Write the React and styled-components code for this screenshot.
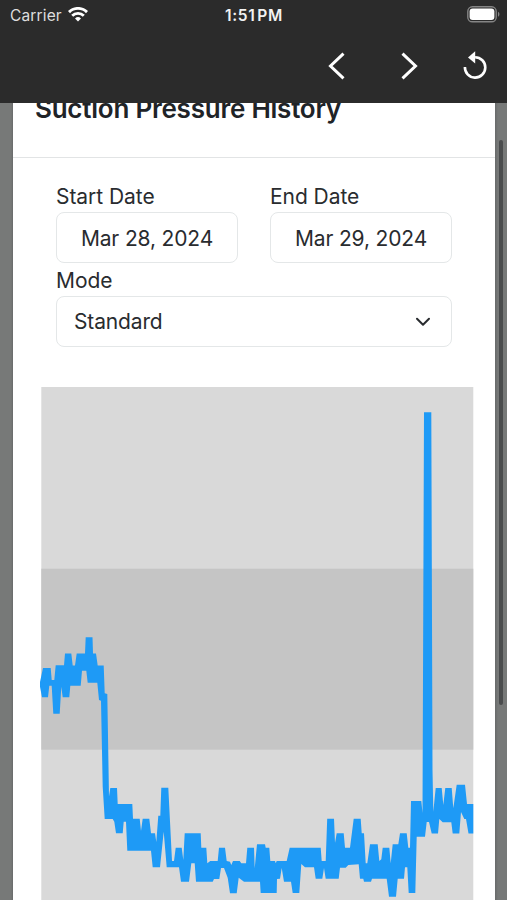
import React from "react";
import styled, { createGlobalStyle } from "styled-components";

/* ---------------- DATA ---------------- */

// upper edge of the pressure trace, left to right
const upper = `40,682 43,668 50.7,668 51.7,680 54.3,680 55.7,665.3 64,665.3 65,653.5
  71.3,653.5 72.7,665.5 75,665.5 76.7,653.5 85,653.5 85.7,637.3 92.5,637.3 93,653.5
  96,653.5 97.7,665.5 103.7,665.5 104.7,693.3 107.3,694 109,796.5 110.3,788 117,788
  117.7,804 132.3,804 133,818.7 139.7,818.7 141,831 142.7,818.7 149.3,818.7 151,833.3
  155,833.3 156.3,842 158.3,815.7 160.3,815.7 161.3,787.7 168.3,787.7 172,861 174,861
  175.7,847.7 181.7,847.7 183.3,860 184.7,833.3 200.7,833.3 201.3,847.7 206.3,847.7
  207.3,863.3 210.3,861 217.7,861 219,847.7 225,847.7 226.7,861 230,861.7 231.3,865
  233,861 239.7,861 241.3,863.3 246,863.3 247.3,847.7 254,847.7 254.7,868.3 257,844.3
  265,844.3 265.7,847.7 269.3,847.7 270.3,861 275,861 275.7,863.3 276.7,861 286.7,861
  289.7,847.7 320.7,847.7 321.7,861 325.7,861 327.2,818.7 334,818.7 335,843 336.7,833.3
  343.7,833.3 345,847.7 350,847.7 353.7,818.7 360.7,818.7 361.7,833.3 364,833.3
  365.7,863.3 367.3,863.3 370,844.3 377.7,844.3 379.3,861 381.3,859.3 382.7,847.7
  389.3,847.7 390.7,863.3 392.7,844.3 398.3,844.3 400,833.3 406.7,833.3 408.3,847.7
  410,847.7 411,801 421.3,801 422.5,813 424,412.3 431.3,412.3 432.5,770 433.3,811.7
  435.7,788 441.7,788 443.3,805 445.3,788 451.7,788 453.3,808.3 456.7,784.7 465,784.7
  467,804 473.3,804`;

// lower edge, right to left
const lower = `473.3,833.5 468.5,833.5 466,819 464.3,819 461,812 459.3,833.5 452.7,833.5
  451.3,822.3 442.7,822.3 439.3,819 438,833.5 431.7,833.5 429,822 426.7,822 425,836.7
  416.7,836.7 415.3,893 408.7,893 407.3,867.3 405,867.3 404,878.7 397.7,878.7 396,896.7
  389,896.7 386.7,878.7 372,878.7 371,881.7 364,881.7 363.3,878.7 360,878.7 358.7,864.3
  348.3,865 345.7,867.7 340,867.7 338.7,878.7 325.7,878.7 324,868 322.3,878.7
  315.7,878.7 314,867.3 305,867.3 301.3,864 299.3,893 292.7,893 291,881.7 284,881.7
  281.7,868 280,878.7 277,879 276.7,893 260.7,893 260,881.7 244,881.7 238.7,877.7
  236.7,893.3 230,893.3 227.7,877.7 224,868 221,868 219.3,879 214,879 212.7,881.7
  196,881.7 194.7,863.3 191.3,863.3 189,881.7 181,881.7 179,867.3 166.7,867.3
  163.7,831.7 160,867.3 152.7,867.3 151,850.7 127.3,850.7 126,821.7 123.7,821.7
  122.7,833.3 116,833.3 114.3,821.7 112.7,819 104.7,819 102.7,786.7 101,700.7 99,700
  97.3,682.7 87.7,682.7 86.3,670.7 82,670.7 80.7,685.7 70.3,685.7 69.3,697.3 62.7,697.3
  61.3,686.7 59.7,713.7 53.3,713.7 51.7,685.7 49.3,685.7 48,697.3 42,697.3 40,686.7`;

const dates = [
  { label: "Start Date", value: "Mar 28, 2024" },
  { label: "End Date", value: "Mar 29, 2024" },
];

/* ---------------- COMPONENT ---------------- */

const App = () => (
  <>
    <GlobalStyle />
    <Screen>
      <Header>
        <StatusBar>
          <Carrier>
            Carrier
            <svg width="20" height="15" viewBox="0 0 20 15" fill="none" stroke="#fff">
              <path d="M1 5.1a12.8 12.8 0 0 1 18 0" strokeWidth="2.9" />
              <path d="M4.2 8.8a8.1 8.1 0 0 1 11.6 0" strokeWidth="2.8" />
              <path d="M7 11.5a4.3 4.3 0 0 1 6 0L10 14.6z" fill="#fff" stroke="none" />
            </svg>
          </Carrier>
          <Clock>1:51 PM</Clock>
          <svg width="33" height="17" viewBox="0 0 33 17">
            <rect x="0.8" y="0.8" width="28.4" height="15" rx="4.6" fill="none" stroke="#858585" strokeWidth="1.4" />
            <rect x="2.6" y="2.6" width="24.8" height="11.4" rx="3" fill="#fff" />
            <path d="M31 5.8v5c1.9-.8 1.9-4.2 0-5z" fill="#858585" />
          </svg>
        </StatusBar>
        <Toolbar>
          <ToolButton aria-label="Back">
            <svg width="18" height="28" viewBox="0 0 18 28">
              <path d="M15.5 1.7 2.5 14l13 12.3" />
            </svg>
          </ToolButton>
          <ToolButton aria-label="Forward">
            <svg width="18" height="28" viewBox="0 0 18 28">
              <path d="M2.5 1.7 15.5 14 2.5 26.3" />
            </svg>
          </ToolButton>
          <ToolButton aria-label="Reload">
            <svg width="24" height="28" viewBox="0 0 24 28">
              <path d="M1.9 15a10.2 10.2 0 1 0 10.2-9.8" strokeWidth="2.6" />
              <path d="M12.2 -0.8v12.4L5 5.6z" fill="#fff" stroke="none" />
            </svg>
          </ToolButton>
        </Toolbar>
      </Header>

      <Backdrop>
        <Card>
          <CardHeader>
            <Title>Suction Pressure History</Title>
          </CardHeader>
          <Form>
            <DateRow>
              {dates.map((d) => (
                <Field key={d.label}>
                  <Label>{d.label}</Label>
                  <Control $center>{d.value}</Control>
                </Field>
              ))}
            </DateRow>
            <Field>
              <Label>Mode</Label>
              <Control>
                Standard
                <svg width="16" height="10" viewBox="0 0 16 10" fill="none" stroke="#292c2f" strokeWidth="2" strokeLinecap="round" strokeLinejoin="round">
                  <path d="M2 1.8 8 7.8l6-6" />
                </svg>
              </Control>
            </Field>
          </Form>
          <Chart width="432" height="513" viewBox="41 387 432 513">
            <rect x="41.3" y="387" width="432" height="513" fill="#d9d9d9" />
            <rect x="41.3" y="568.7" width="432" height="181" fill="#c5c5c5" />
            <polygon points={`${upper} ${lower}`} fill="#1e9af6" />
          </Chart>
        </Card>
        <ScrollThumb />
      </Backdrop>
    </Screen>
  </>
);

export default App;

/* ---------------- STYLES ---------------- */

const GlobalStyle = createGlobalStyle`
  * {
    box-sizing: border-box;
  }

  body {
    margin: 0;
    font-family: Inter, "Liberation Sans", sans-serif;
    color: #292c2f;
  }
`;

const Screen = styled.div`
  display: flex;
  flex-direction: column;
  height: 900px;
  overflow: hidden;
`;

const Header = styled.header`
  flex: none;
  height: 103px;
  background: #2b2b2b;
  color: #f2f2f2;
`;

const StatusBar = styled.div`
  display: grid;
  grid-template-columns: 1fr auto 1fr;
  align-items: center;
  height: 29px;
  padding: 0 7px 0 10px;

  > svg {
    justify-self: end;
  }
`;

const Carrier = styled.div`
  display: flex;
  align-items: center;
  gap: 7px;
  font-size: 15.5px;
  letter-spacing: 0.15px;
  line-height: 20px;
  color: #dedede;
  padding-top: 2px;

  svg {
    margin: -2px 0 0 -1px;
  }
`;

const Clock = styled.div`
  font-size: 15.5px;
  font-weight: 600;
  line-height: 20px;
  padding: 2px 2px 0 0;
  letter-spacing: 0.65px;
  word-spacing: -2.6px;
`;

const Toolbar = styled.nav`
  display: flex;
  justify-content: flex-end;
  align-items: center;
  height: 74px;
  padding: 0 20px 0 0;
`;

const ToolButton = styled.button`
  display: flex;
  padding: 0;
  border: none;
  background: none;

  & + & {
    margin-left: 54px;
  }

  &:last-child {
    margin-left: 45px;
  }

  svg {
    fill: none;
    stroke: #fff;
    stroke-width: 3;
    overflow: visible;
  }
`;

const Backdrop = styled.main`
  position: relative;
  flex: 1;
  min-height: 0;
  overflow: hidden;
  padding: 0 12px 0 13px;
  background: linear-gradient(90deg, #777978 0, #777978 11px, #686a6a 13px, #686a6a 495px, #777978 498px);
`;

const Card = styled.section`
  height: 100%;
  background: #fff;
`;

const CardHeader = styled.div`
  height: 55px;
  padding-left: 22px;
  border-bottom: 1px solid #e2e4e5;
`;

const Title = styled.h1`
  margin: 0;
  font-size: 26px;
  font-weight: 600;
  line-height: 32px;
  letter-spacing: -0.23px;
  white-space: nowrap;
  color: #202327;
  transform: translateY(-10px);
`;

const Form = styled.form`
  padding: 26px 43px 0 43px;
`;

const DateRow = styled.div`
  display: grid;
  grid-template-columns: 1fr 1fr;
  gap: 32px;
`;

const Field = styled.div`
  height: 83.5px;
`;

const Label = styled.label`
  display: block;
  height: 28px;
  font-size: 21px;
  line-height: 25px;
  letter-spacing: -0.05px;
`;

const Control = styled.div`
  display: flex;
  align-items: center;
  justify-content: ${(p) => (p.$center ? "center" : "space-between")};
  height: 51px;
  padding: 1px ${(p) => (p.$center ? 0 : 20)}px 0 ${(p) => (p.$center ? 0 : 17)}px;
  border: 1.5px solid #e4e7e8;
  border-radius: 8px;
  font-size: 21px;
  letter-spacing: -0.15px;
`;

const Chart = styled.svg`
  display: block;
  margin: 36px 0 0 28px;
  overflow: visible;
`;

const ScrollThumb = styled.div`
  position: absolute;
  top: 37px;
  right: 4px;
  width: 4px;
  height: 565px;
  border-radius: 2px;
  background: #4a4c4d;
`;
